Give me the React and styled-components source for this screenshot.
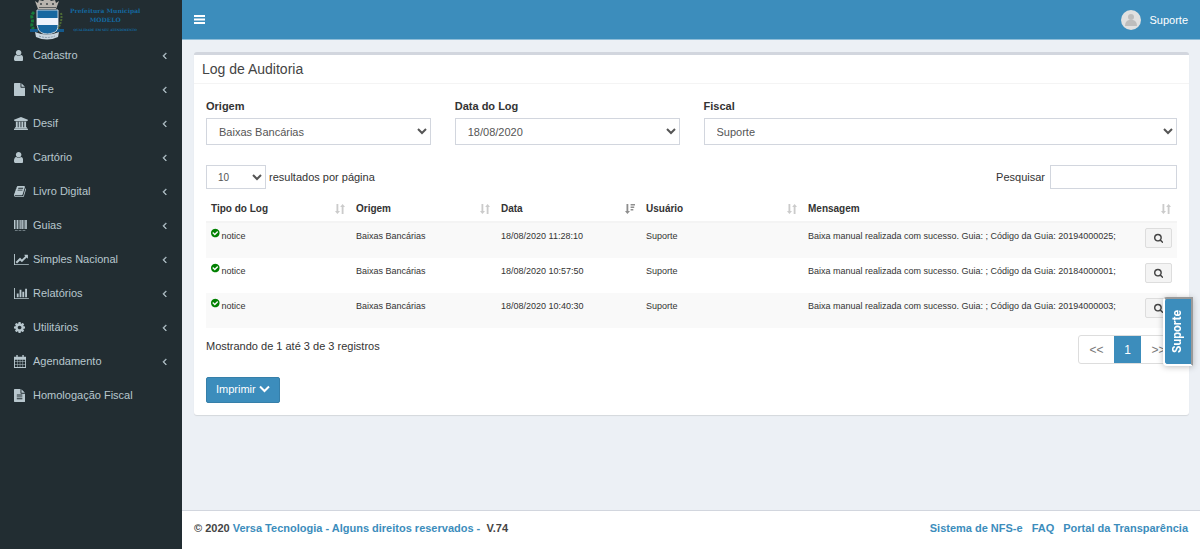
import React from 'react';
import styled, { createGlobalStyle } from 'styled-components';

const blue = '#3c8dbc';
const line = '#d2d6de';

const GlobalStyle = createGlobalStyle`
  *, *::before, *::after { box-sizing: border-box; }
  body {
    margin: 0;
    font-family: "Liberation Sans", Arial, sans-serif;
    font-size: 11px;
    line-height: 16px;
    color: #333;
    background: #ecf0f5;
  }
  button, input, select { font-family: inherit; margin: 0; }
  a { color: ${blue}; text-decoration: none; }
`;

const Shell = styled.div`
  display: flex;
  min-height: 100vh;
`;

const Sidebar = styled.aside`
  flex: 0 0 182px;
  background: #222d32;
`;

const Brand = styled.a`
  display: flex;
  align-items: flex-start;
  gap: 6px;
  height: 38px;
  padding-left: 30px;
  color: #14689f;
`;

const BrandText = styled.span`
  display: flex;
  flex-direction: column;
  align-items: center;
  padding-top: 6px;
  font-family: "DejaVu Serif", serif;
  font-weight: bold;
  font-size: 6px;
  line-height: 9px;
`;

const BrandMotto = styled.small`
  font-size: 3px;
  line-height: 12px;
`;

const Menu = styled.ul`
  list-style: none;
  margin: 0;
  padding: 0;
`;

const MenuLink = styled.a`
  display: flex;
  align-items: center;
  height: 34px;
  padding: 0 15px 0 14px;
  color: #b8c7ce;
`;

const MenuIcon = styled.span`
  display: flex;
  width: 19px;
  padding-top: 1px;
`;

const MenuLabel = styled.span`
  flex: 1;
`;

const Main = styled.div`
  flex: 1;
  min-width: 0;
  display: flex;
  flex-direction: column;
`;

const TopBar = styled.header`
  display: flex;
  align-items: center;
  justify-content: space-between;
  height: 40px;
  padding: 0 12px;
  background: ${blue};
  border-bottom: 1px solid #8fbdd8;
  color: #fff;
`;

const MenuToggle = styled.button`
  display: flex;
  padding: 0;
  border: 0;
  background: none;
  color: #fff;
`;

const UserLink = styled.a`
  display: flex;
  align-items: center;
  gap: 8px;
  color: #fff;
`;

const Content = styled.main`
  flex: 1;
  padding: 12px 11px 12px 12px;
`;

const Box = styled.section`
  background: #fff;
  border-top: 3px solid ${line};
  border-radius: 3px;
  box-shadow: 0 1px 1px rgba(0, 0, 0, 0.1);
`;

const BoxTitle = styled.h3`
  margin: 0;
  padding: 5px 8px;
  border-bottom: 1px solid #f4f4f4;
  font-size: 14px;
  line-height: 18px;
  font-weight: normal;
  color: #444;
`;

const BoxBody = styled.div`
  padding: 14px 12px 12px;
`;

const Filters = styled.div`
  display: grid;
  grid-template-columns: repeat(4, 1fr);
  gap: 24px;
`;

const Field = styled.div`
  display: flex;
  flex-direction: column;
  gap: 4px;
  grid-column: span ${(p) => p.$span || 1};
`;

const FieldLabel = styled.label`
  font-weight: bold;
`;

const Select = styled.select`
  width: ${(p) => (p.$small ? '60px' : '100%')};
  height: ${(p) => (p.$small ? '24px' : '27px')};
  padding: 0 0 0 ${(p) => (p.$small ? '7px' : '8px')};
  border: 1px solid ${line};
  border-radius: 0;
  background: #fff;
  color: #555;
  font-size: ${(p) => (p.$small ? '10px' : '11px')};
`;

const Toolbar = styled.div`
  display: flex;
  justify-content: space-between;
  margin: 20px 0 8px;
`;

const ToolLabel = styled.label`
  display: flex;
  align-items: center;
  gap: ${(p) => p.$gap};
`;

const SearchInput = styled.input`
  width: 127px;
  height: 24px;
  padding: 0 8px;
  border: 1px solid ${line};
  font-size: 10px;
`;

const Table = styled.table`
  width: 100%;
  border-collapse: separate;
  border-spacing: 0;
  table-layout: fixed;
  line-height: 16px;
`;

const Col = styled.col`
  width: ${(p) => p.$w};
`;

const Th = styled.th`
  height: 26px;
  padding: 0 6px 0 5px;
  border-bottom: 2px solid #f4f4f4;
  text-align: left;
  font-size: 10px;
`;

const ThInner = styled.div`
  display: flex;
  align-items: center;
  justify-content: space-between;
`;

const Row = styled.tr`
  height: 35px;
  background: ${(p) => (p.$odd ? '#f9f9f9' : '#fff')};
`;

const Td = styled.td`
  padding: 5px 5px 0;
  vertical-align: top;
  white-space: nowrap;
  font-size: 9px;
`;

const Status = styled.span`
  display: flex;
  align-items: flex-start;
  gap: 2px;
`;

const DetailButton = styled.button`
  display: flex;
  align-items: center;
  justify-content: center;
  width: 27px;
  height: 20px;
  padding: 0;
  border: 1px solid #ddd;
  border-radius: 2px;
  background: #f4f4f4;
  color: #444;
`;

const TableFooter = styled.div`
  display: flex;
  justify-content: space-between;
  align-items: flex-start;
  padding-top: 7px;
`;

const Info = styled.span`
  padding-top: 3px;
`;

const Pagination = styled.nav`
  display: flex;
  border: 1px solid #ddd;
  border-radius: 3px;
`;

const PageButton = styled.button`
  width: ${(p) => (p.$active ? '27px' : '35px')};
  height: 27px;
  padding: 0;
  border: 0;
  background: ${(p) => (p.$active ? blue : 'transparent')};
  color: ${(p) => (p.$active ? '#fff' : '#777')};
  font-size: 12px;
`;

const PrintButton = styled.button`
  display: flex;
  align-items: center;
  gap: 3px;
  height: 26px;
  margin-top: 13px;
  padding: 0 9px 3px;
  border: 1px solid #367fa9;
  border-radius: 2px;
  background: ${blue};
  color: #fff;
  font-size: 11px;
`;

const Footer = styled.footer`
  display: flex;
  justify-content: space-between;
  padding: 9px 12px 13px;
  background: #fff;
  border-top: 1px solid ${line};
  font-weight: bold;
  color: #444;
`;

const FooterLinks = styled.nav`
  display: flex;
  gap: 9px;
`;

const SupportTab = styled.button`
  position: fixed;
  right: 7px;
  top: 297px;
  display: flex;
  align-items: center;
  justify-content: center;
  width: 30px;
  height: 69px;
  padding: 0 2px 0 0;
  border: 2px solid;
  border-color: #999 #999 #fff #fff;
  border-radius: 4px 0 0 4px;
  background: ${blue};
  box-shadow: 0 1px 6px rgba(0, 0, 0, 0.25);
  color: #fff;
  font-family: Roboto, sans-serif;
  font-size: 12px;
  font-weight: bold;
`;

const SupportText = styled.span`
  writing-mode: vertical-rl;
  transform: rotate(180deg);
`;

const icons = {
  user: { d: 'M1536 1399q0 109-62.5 187t-150.5 78h-854q-88 0-150.5-78t-62.5-187q0-85 8.5-160.5t31.5-152 58.5-131 94-89 134.5-34.5q131 128 313 128t313-128q76 0 134.5 34.5t94 89 58.5 131 31.5 152 8.5 160.5zm-256-887q0 159-112.5 271.5t-271.5 112.5-271.5-112.5-112.5-271.5 112.5-271.5 271.5-112.5 271.5 112.5 112.5 271.5z', x: 256, w: 1280 },
  file: { d: 'M1152 512v-472q22 14 36 28l408 408q14 14 28 36h-472zm-128 32q0 40 28 68t68 28h544v1056q0 40-28 68t-68 28h-1344q-40 0-68-28t-28-68v-1600q0-40 28-68t68-28h800v544z', x: 128, w: 1536 },
  bank: { d: 'M960 0l960 384v128h-128q0 26-20.5 45t-48.5 19h-1526q-28 0-48.5-19t-20.5-45h-128v-128zm-704 640h256v768h128v-768h256v768h128v-768h256v768h128v-768h256v768h59q28 0 48.5 19t20.5 45v64h-1664v-64q0-26 20.5-45t48.5-19h59v-768zm1595 960q28 0 48.5 19t20.5 45v128h-1920v-128q0-26 20.5-45t48.5-19h1782z', x: 0, w: 1920 },
  book: { d: 'M1703 478q40 57 18 129l-275 906q-19 64-76.5 107.5t-122.5 43.5h-923q-77 0-148.5-53.5t-99.5-131.5q-24-67-2-127 0-4 3-27t4-37q1-8-3-21.5t-3-19.5q2-11 8-21t16.5-23.5 16.5-23.5q23-38 45-91.5t30-91.5q3-10 .5-30t-.5-28q3-11 17-28t17-23q21-36 42-92t25-90q1-9-2.5-32t.5-28q4-13 22-30.5t22-22.5q19-26 42.5-84.5t27.5-96.5q1-8-3-25.5t-2-26.5q2-8 9-18t18-23 17-21q8-12 16.5-30.5t15-35 16-36 19.5-32 26.5-23.5 36-11.5 47.5 5.5l-1 3q38-9 51-9h761q74 0 114 56t18 130l-274 906q-36 119-71.5 153.5t-128.5 34.5h-869q-27 0-38 15-11 16-1 43 24 70 144 70h923q29 0 56-15.5t35-41.5l300-987q7-22 5-57 38 15 59 43zm-1064 2q-4 13 2 22.5t20 9.5h608q13 0 25.5-9.5t16.5-22.5l21-64q4-13-2-22.5t-20-9.5h-608q-13 0-25.5 9.5t-16.5 22.5zm-83 256q-4 13 2 22.5t20 9.5h608q13 0 25.5-9.5t16.5-22.5l21-64q4-13-2-22.5t-20-9.5h-608q-13 0-25.5 9.5t-16.5 22.5z', x: 64, w: 1664 },
  barcode: { d: 'M0 128h190v1250h-190zM260 128h70v1250h-70zM420 128h190v1250h-190zM700 128h70v1250h-70zM860 128h190v1250h-190zM1120 128h190v1250h-190zM1380 128h70v1250h-70zM1540 128h230v1250h-230zM128 1500h380v100h-380zM640 1500h380v100h-380zM1180 1500h380v100h-380z', x: 0, w: 1792 },
  line: { d: 'M1920 1536v128h-2048v-1536h128v1408h1920zm-128-1248v435q0 21-19.5 29.5t-35.5-7.5l-121-121-633 633q-10 10-23 10t-23-10l-233-233-416 416-192-192 585-585q10-10 23-10t23 10l233 233 464-464-121-121q-16-16-7.5-35.5t29.5-19.5h435q14 0 23 9t9 23z', x: -128, w: 2048 },
  bars: { d: 'M640 896v512h-256v-512h256zm384-512v1024h-256v-1024h256zm1024 1152v128h-2048v-1536h128v1408h1920zm-640-896v768h-256v-768h256zm384-384v1152h-256v-1152h256z', x: 0, w: 2048 },
  cog: { d: 'M1152 896q0-106-75-181t-181-75-181 75-75 181 75 181 181 75 181-75 75-181zm512-109v222q0 12-8 23t-20 13l-185 28q-19 54-39 91 35 50 107 138 10 12 10 25t-9 23q-27 37-99 108t-94 71q-12 0-26-9l-138-108q-44 23-91 38-16 136-29 186-7 28-36 28h-222q-14 0-24.5-8.5t-11.5-21.5l-28-184q-49-16-90-37l-141 107q-10 9-25 9-14 0-25-11-126-114-165-168-7-10-7-23 0-12 8-23 15-21 51-66.5t54-70.5q-27-50-41-99l-183-27q-13-2-21-12.5t-8-23.5v-222q0-12 8-23t19-13l186-28q14-46 39-92-40-57-107-138-10-12-10-24 0-10 9-23 26-36 98.5-107.5t94.5-71.5q13 0 26 10l138 107q44-23 91-38 16-136 29-186 7-28 36-28h222q14 0 24.5 8.5t11.5 21.5l28 184q49 16 90 37l142-107q9-9 24-9 13 0 25 10 129 119 165 170 7 8 7 22 0 12-8 23-15 21-51 66.5t-54 70.5q26 50 41 98l183 28q13 2 21 12.5t8 23.5z', x: 128, w: 1536 },
  calendar: { d: 'M0 256h1664v1536h-1664zM128 640v256h288v-256zM480 640v256h320v-256zM864 640v256h320v-256zM1248 640v256h288v-256zM128 960v320h288v-320zM480 960v320h320v-320zM864 960v320h320v-320zM1248 960v320h288v-320zM128 1344v320h288v-320zM480 1344v320h320v-320zM864 1344v320h320v-320zM1248 1344v320h288v-320zM320 0h192v256h-192zM1152 0h192v256h-192z', x: 0, w: 1664 },
  fileText: { d: 'M1596 476q14 14 28 36h-472v-472q22 14 36 28zm-476 164h544v1056q0 40-28 68t-68 28h-1344q-40 0-68-28t-28-68v-1600q0-40 28-68t68-28h800v544q0 40 28 68t68 28zm160 736v-64q0-14-9-23t-23-9h-704q-14 0-23 9t-9 23v64q0 14 9 23t23 9h704q14 0 23-9t9-23zm0-256v-64q0-14-9-23t-23-9h-704q-14 0-23 9t-9 23v64q0 14 9 23t23 9h704q14 0 23-9t9-23zm0-256v-64q0-14-9-23t-23-9h-704q-14 0-23 9t-9 23v64q0 14 9 23t23 9h704q14 0 23-9t9-23z', x: 128, w: 1536 },
  angle: { d: 'M1203 544q0 13-10 23l-393 393 393 393q10 10 10 23t-10 23l-50 50q-10 10-23 10t-23-10l-466-466q-10-10-10-23t10-23l466-466q10-10 23-10t23 10l50 50q10 10 10 23z', x: 480, w: 832, stroke: 90 },
  search: { d: 'M1216 832q0-185-131.5-316.5t-316.5-131.5-316.5 131.5-131.5 316.5 131.5 316.5 316.5 131.5 316.5-131.5 131.5-316.5zm512 832q0 52-38 90t-90 38q-54 0-90-38l-343-342q-179 124-399 124-143 0-273.5-55.5t-225-150-150-225-55.5-273.5 55.5-273.5 150-225 225-150 273.5-55.5 273.5 55.5 225 150 150 225 55.5 273.5q0 220-124 399l343 343q37 37 37 90z', x: 64, w: 1664 },
  check: { d: 'M1412 734q0-28-18-46l-91-90q-19-19-45-19t-45 19l-408 407-226-226q-19-19-45-19t-45 19l-91 90q-18 18-18 46 0 27 18 45l362 362q19 19 45 19 27 0 46-19l543-543q18-18 18-45zm252 162q0 209-103 385.5t-279.5 279.5-385.5 103-385.5-103-279.5-279.5-103-385.5 103-385.5 279.5-279.5 385.5-103 385.5 103 279.5 279.5 103 385.5z', x: 128, w: 1536 },
  toggle: { d: 'M128 276h1536v276h-1536zM128 756h1536v276h-1536zM128 1236h1536v276h-1536z', x: 128, w: 1536 },
};

function Icon({ name, size = 13, color = 'currentColor' }) {
  const icon = icons[name];
  return (
    <svg
      width={(size * icon.w) / 1792}
      height={size}
      viewBox={`${icon.x} 0 ${icon.w} 1792`}
      fill={color}
      fillRule={name === 'calendar' ? 'evenodd' : 'nonzero'}
      stroke={icon.stroke ? color : 'none'}
      strokeWidth={icon.stroke}
      aria-hidden="true"
    >
      <path d={icon.d} />
    </svg>
  );
}

function SortIcon({ active }) {
  return (
    <svg width="10" height="10" viewBox="0 0 10 10" fill="#333" opacity={active ? 0.55 : 0.25} aria-hidden="true">
      <path d="M1.500 0h1.800v7H5L2.400 10 0 7h1.500z" />
      {active ? <path d="M5.600 0H10v1.600H5.600zM5.600 2.500h3.600v1.500H5.600zM5.600 5h2.700v1.400H5.600z" /> : <path d="M6.700 10h1.800V3H10L7.600 0 5.200 3h1.500z" />}
    </svg>
  );
}

function Crest() {
  return (
    <svg width="34" height="40" viewBox="0 0 34 40" aria-hidden="true">
      <path d="M5 1l3 2 1-3 4 1 1-1h6l1 1 4-1 1 3 3-2-3 8H8z" fill="#b9b4ae" />
      <path d="M10 3h2v2h-2zM16 3h2v2h-2zM22 3h2v2h-2zM9 7h17v1H9z" fill="#5c5f60" />
      <path d="M4 12q-3 3-2 6t0 6 2 5" fill="none" stroke="#177a3b" strokeWidth="3" strokeDasharray="3 1" />
      <path d="M31 13q1 4 0 8t-3 8" fill="none" stroke="#4d6b36" strokeWidth="2" strokeDasharray="2 1" />
      <path d="M0 29h8v3H0zM26 29h8v3h-8z" fill="#14598c" />
      <path d="M7 10h21v15q0 6-4 7.500t-6.500 1.500Q14 34 11 32.500T7 25z" fill="#1767a0" stroke="#c5d2dc" />
      <path d="M7 18h21v7H7z" fill="#edf2fb" />
      <path d="M5 32q12 5 24 0l-1 5q-11 5-22 0z" fill="#c8d5df" />
      <path d="M9 36q8 3 16 0" fill="none" stroke="#8a9cab" strokeDasharray="2 1" />
    </svg>
  );
}

const menu = [
  ['user', 'Cadastro'],
  ['file', 'NFe'],
  ['bank', 'Desif'],
  ['user', 'Cartório'],
  ['book', 'Livro Digital'],
  ['barcode', 'Guias'],
  ['line', 'Simples Nacional'],
  ['bars', 'Relatórios'],
  ['cog', 'Utilitários'],
  ['calendar', 'Agendamento'],
  ['fileText', 'Homologação Fiscal', true],
];

const logs = [
  ['18/08/2020 11:28:10', '20194000025'],
  ['18/08/2020 10:57:50', '20184000001'],
  ['18/08/2020 10:40:30', '20194000003'],
];

const columns = ['Tipo do Log', 'Origem', 'Data', 'Usuário', 'Mensagem'];

export default function App() {
  return (
    <>
      <GlobalStyle />
      <Shell>
        <Sidebar>
          <Brand href="#">
            <Crest />
            <BrandText>
              <span>Prefeitura Municipal</span>
              <span>MODELO</span>
              <BrandMotto>QUALIDADE EM SEU ATENDIMENTO</BrandMotto>
            </BrandText>
          </Brand>
          <Menu>
            {menu.map(([icon, label, leaf]) => (
              <li key={label}>
                <MenuLink href="#">
                  <MenuIcon><Icon name={icon} /></MenuIcon>
                  <MenuLabel>{label}</MenuLabel>
                  {!leaf && <Icon name="angle" size={11} />}
                </MenuLink>
              </li>
            ))}
          </Menu>
        </Sidebar>
        <Main>
          <TopBar>
            <MenuToggle aria-label="Menu"><Icon name="toggle" /></MenuToggle>
            <UserLink href="#">
              <svg width="20" height="20" viewBox="0 0 20 20" aria-hidden="true">
                <circle cx="10" cy="10" r="10" fill="#e0e0e0" />
                <circle cx="10" cy="7" r="3" fill="#bdbdbd" />
                <path d="M4 16q0-5 4-6h4q4 1 4 6z" fill="#bdbdbd" />
              </svg>
              Suporte
            </UserLink>
          </TopBar>
          <Content>
            <Box>
              <BoxTitle>Log de Auditoria</BoxTitle>
              <BoxBody>
                <Filters>
                  <Field>
                    <FieldLabel htmlFor="origem">Origem</FieldLabel>
                    <Select id="origem"><option>Baixas Bancárias</option></Select>
                  </Field>
                  <Field>
                    <FieldLabel htmlFor="data">Data do Log</FieldLabel>
                    <Select id="data"><option>18/08/2020</option></Select>
                  </Field>
                  <Field $span={2}>
                    <FieldLabel htmlFor="fiscal">Fiscal</FieldLabel>
                    <Select id="fiscal"><option>Suporte</option></Select>
                  </Field>
                </Filters>
                <Toolbar>
                  <ToolLabel $gap="3px">
                    <Select $small><option>10</option></Select>
                    resultados por página
                  </ToolLabel>
                  <ToolLabel $gap="5px">
                    Pesquisar
                    <SearchInput type="search" />
                  </ToolLabel>
                </Toolbar>
                <Table>
                  <colgroup>
                    <Col $w="145px" />
                    <Col $w="145px" />
                    <Col $w="145px" />
                    <Col $w="162px" />
                    <Col />
                    <Col $w="37px" />
                  </colgroup>
                  <thead>
                    <tr>
                      {columns.map((c) => (
                        <Th key={c} colSpan={c === 'Mensagem' ? 2 : 1}>
                          <ThInner>{c}<SortIcon active={c === 'Data'} /></ThInner>
                        </Th>
                      ))}
                    </tr>
                  </thead>
                  <tbody>
                    {logs.map(([date, code], i) => (
                      <Row key={code} $odd={i % 2 === 0}>
                        <Td><Status><Icon name="check" size={10} color="#008000" />notice</Status></Td>
                        <Td>Baixas Bancárias</Td>
                        <Td>{date}</Td>
                        <Td>Suporte</Td>
                        <Td>Baixa manual realizada com sucesso. Guia: ; Código da Guia: {code};</Td>
                        <Td><DetailButton aria-label="Detalhes"><Icon name="search" size={10} /></DetailButton></Td>
                      </Row>
                    ))}
                  </tbody>
                </Table>
                <TableFooter>
                  <Info>Mostrando de 1 até 3 de 3 registros</Info>
                  <Pagination>
                    <PageButton>&lt;&lt;</PageButton>
                    <PageButton $active>1</PageButton>
                    <PageButton>&gt;&gt;</PageButton>
                  </Pagination>
                </TableFooter>
                <PrintButton>
                  Imprimir
                  <svg width="11" height="8" viewBox="0 0 11 8" fill="none" stroke="currentColor" strokeWidth="2" aria-hidden="true">
                    <path d="M1 1.500l4.500 4.500L10 1.500" />
                  </svg>
                </PrintButton>
              </BoxBody>
            </Box>
          </Content>
          <Footer>
            <span>© 2020 <a href="#">Versa Tecnologia - Alguns direitos reservados -</a>&nbsp; V.74</span>
            <FooterLinks>
              <a href="#">Sistema de NFS-e</a>
              <a href="#">FAQ</a>
              <a href="#">Portal da Transparência</a>
            </FooterLinks>
          </Footer>
        </Main>
      </Shell>
      <SupportTab><SupportText>Suporte</SupportText></SupportTab>
    </>
  );
}
